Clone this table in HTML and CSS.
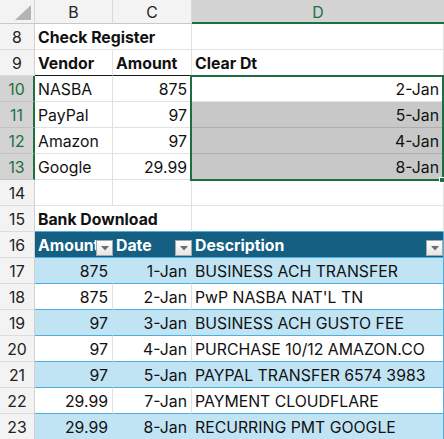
FILE: index.html
```html
<!DOCTYPE html>
<html>
<head>
<meta charset="utf-8">
<link rel="stylesheet" href="styles.css">
</head>
<body>
<div class="sheet">
  <div class="corner"><svg width="35" height="24" viewBox="0 0 35 24"><polygon points="31,5 31,20 15,20" fill="#b4b4b4"/></svg></div>
  <div class="colhead">B</div>
  <div class="colhead">C</div>
  <div class="colhead colsel">D</div>

  <div class="rh">8</div>
  <div class="c span2 b">Check Register</div>
  <div class="c"></div>

  <div class="rh">9</div>
  <div class="c b under">Vendor</div>
  <div class="c b under">Amount</div>
  <div class="c b">Clear Dt</div>

  <div class="rh rsel">10</div>
  <div class="c">NASBA</div>
  <div class="c r">875</div>
  <div class="c r">2-Jan</div>

  <div class="rh rsel">11</div>
  <div class="c">PayPal</div>
  <div class="c r">97</div>
  <div class="c r grey">5-Jan</div>

  <div class="rh rsel">12</div>
  <div class="c">Amazon</div>
  <div class="c r">97</div>
  <div class="c r grey">4-Jan</div>

  <div class="rh rsel">13</div>
  <div class="c">Google</div>
  <div class="c r">29.99</div>
  <div class="c r grey">8-Jan</div>

  <div class="rh">14</div>
  <div class="c"></div>
  <div class="c"></div>
  <div class="c"></div>

  <div class="rh">15</div>
  <div class="c span2 b tabtop">Bank Download</div>
  <div class="c tabtop"></div>

  <div class="rh">16</div>
  <div class="c th"><span class="tht">Amount</span><span class="filter"><svg width="8" height="5" viewBox="0 0 8 5"><polygon points="0,0 8,0 4,4.5" fill="#6e6e6e"/></svg></span></div>
  <div class="c th"><span class="tht">Date</span><span class="filter"><svg width="8" height="5" viewBox="0 0 8 5"><polygon points="0,0 8,0 4,4.5" fill="#6e6e6e"/></svg></span></div>
  <div class="c th last"><span class="tht">Description</span><span class="filter"><svg width="8" height="5" viewBox="0 0 8 5"><polygon points="0,0 8,0 4,4.5" fill="#6e6e6e"/></svg></span></div>

  <div class="rh">17</div>
  <div class="c r band">875</div>
  <div class="c r band">1-Jan</div>
  <div class="c band last">BUSINESS ACH TRANSFER</div>

  <div class="rh">18</div>
  <div class="c r plain">875</div>
  <div class="c r plain">2-Jan</div>
  <div class="c plain last">PwP NASBA NAT'L TN</div>

  <div class="rh">19</div>
  <div class="c r band">97</div>
  <div class="c r band">3-Jan</div>
  <div class="c band last">BUSINESS ACH GUSTO FEE</div>

  <div class="rh">20</div>
  <div class="c r plain">97</div>
  <div class="c r plain">4-Jan</div>
  <div class="c plain last">PURCHASE 10/12 AMAZON.CO</div>

  <div class="rh">21</div>
  <div class="c r band">97</div>
  <div class="c r band">5-Jan</div>
  <div class="c band last">PAYPAL TRANSFER 6574 3983</div>

  <div class="rh">22</div>
  <div class="c r plain">29.99</div>
  <div class="c r plain">7-Jan</div>
  <div class="c plain last">PAYMENT CLOUDFLARE</div>

  <div class="rh">23</div>
  <div class="c r band">29.99</div>
  <div class="c r band">8-Jan</div>
  <div class="c band last">RECURRING PMT GOOGLE</div>

  <div class="selection"><span class="handle"></span></div>
</div>
</body>
</html>
```

FILE: styles.css
```css
* { box-sizing: border-box; }
html, body { margin: 0; padding: 0; background: #ffffff; }
body {
  font-family: "Inter", "Noto Sans", sans-serif;
  font-size: 15.8px;
  color: #111;
  overflow: hidden;
}
.sheet {
  position: relative;
  display: grid;
  grid-template-columns: 35px 78px 79px 252px;
  grid-template-rows: 24px repeat(16, 26px);
  width: 444px;
}
.corner {
  background: #f3f3f3;
  border-right: 1px solid #d6d6d6;
  border-bottom: 1px solid #c8c8c8;
}
.corner svg { display: block; }
.colhead {
  background: #f3f3f3;
  border-right: 1px solid #dadada;
  border-bottom: 1px solid #c8c8c8;
  display: flex;
  align-items: center;
  justify-content: center;
  color: #222;
  font-size: 15.8px;
  padding-top: 1px;
}
.colsel {
  background: #d3d3d3;
  color: #1e6e42;
  border-bottom: 2px solid #1e6e42;
  border-right: none;
  padding-top: 2px;
}
.rh {
  background: #f3f3f3;
  border-right: 1px solid #d0d0d0;
  border-bottom: 1px solid #dcdcdc;
  display: flex;
  align-items: center;
  justify-content: center;
  color: #222;
  padding-top: 1px;
}
.rsel {
  background: #d3d3d3;
  color: #1e6e42;
  border-right: 2px solid #1e6e42;
  border-bottom-color: #c2c2c2;
}
.c {
  border-right: 1px solid #e1e1e1;
  border-bottom: 1px solid #e1e1e1;
  display: flex;
  align-items: center;
  padding: 1px 4px 0 3px;
  white-space: nowrap;
  overflow: hidden;
}
.span2 { grid-column: span 2; }
.b { font-weight: 700; }
.r { justify-content: flex-end; }
.under { border-bottom: 1px solid #1a1a1a; }
.grey { background: #c8c8c8; border-bottom-color: #aeaeae; }
.tabtop { border-bottom: 1px solid #4eaede; }
.th {
  background: #156082;
  color: #ffffff;
  font-weight: 700;
  border-right: none;
  border-bottom: 1px solid #4eaede;
  padding: 0 0 0 3px;
  gap: 0;
}
.tht { flex: 1; overflow: hidden; padding-top: 1px; }
.filter {
  flex: none;
  width: 17px;
  height: 16px;
  align-self: flex-end;
  margin-bottom: 1px;
  background: linear-gradient(#ffffff, #e6e6e6);
  border: 1px solid #a8a8a8;
  display: flex;
  align-items: center;
  justify-content: center;
}
.filter svg { display: block; margin-top: 1px; }
.band {
  background: #c1e4f5;
  border-right-color: #c1e4f5;
  border-bottom: 1px solid #4eaede;
}
.plain {
  background: #ffffff;
  border-bottom: 1px solid #4eaede;
}
.last { border-right: 1px solid #4eaede; }
.th.last { border-right: 1px solid #4eaede; }
.selection {
  position: absolute;
  left: 190px;
  top: 75px;
  width: 254px;
  height: 106px;
  border: 2px solid #1e6e42;
  pointer-events: none;
}
.handle {
  position: absolute;
  right: -3px;
  bottom: -4px;
  width: 6px;
  height: 6px;
  background: #1e6e42;
  border: 1px solid #ffffff;
}
```
